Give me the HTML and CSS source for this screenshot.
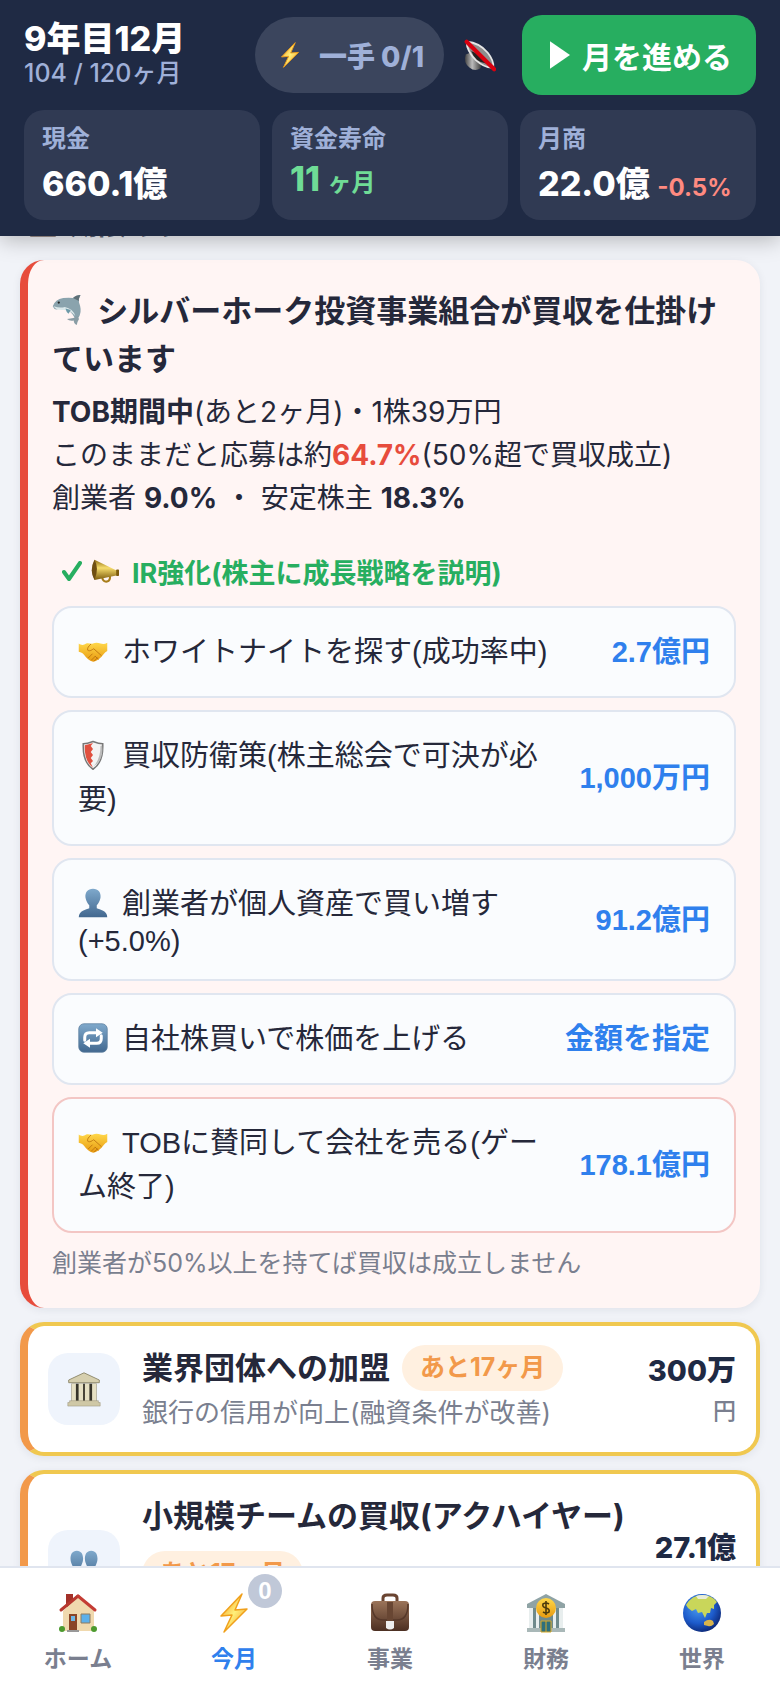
FILE: index.html
```html
<!DOCTYPE html>
<html lang="ja">
<head>
    <meta charset="UTF-8">
    <meta name="viewport" content="width=device-width, initial-scale=1.0">
    <title>9年目12月</title>
    <link rel="stylesheet" href="styles.css">
</head>
<body>
    <!-- Shared icons -->
    <svg class="defs" width="0" height="0" aria-hidden="true">
        <defs>
            <linearGradient id="g-bolt" x1="0" y1="0" x2="1" y2="1">
                <stop offset="0" stop-color="#f08a12"/>
                <stop offset="0.5" stop-color="#fff07a"/>
                <stop offset="1" stop-color="#f08a12"/>
            </linearGradient>
            <linearGradient id="g-gold" x1="0" y1="0" x2="0" y2="1">
                <stop offset="0" stop-color="#ffd84a"/>
                <stop offset="1" stop-color="#e89a10"/>
            </linearGradient>
            <linearGradient id="g-blue" x1="0" y1="0" x2="0" y2="1">
                <stop offset="0" stop-color="#7fa9cc"/>
                <stop offset="1" stop-color="#42688f"/>
            </linearGradient>
            <linearGradient id="g-brass" x1="0" y1="0" x2="0" y2="1">
                <stop offset="0" stop-color="#8f6c14"/>
                <stop offset="0.4" stop-color="#f6dc6c"/>
                <stop offset="1" stop-color="#7c5a0c"/>
            </linearGradient>
            <linearGradient id="g-bag" x1="0" y1="0" x2="0" y2="1">
                <stop offset="0" stop-color="#9b7459"/>
                <stop offset="1" stop-color="#4c2f22"/>
            </linearGradient>
            <radialGradient id="g-globe" cx="0.4" cy="0.35" r="0.7">
                <stop offset="0" stop-color="#4b9df0"/>
                <stop offset="0.6" stop-color="#1d5bcb"/>
                <stop offset="1" stop-color="#0b2470"/>
            </radialGradient>
            <linearGradient id="g-metal" x1="0" y1="0" x2="1" y2="0">
                <stop offset="0" stop-color="#444"/>
                <stop offset="0.4" stop-color="#bbb"/>
                <stop offset="1" stop-color="#222"/>
            </linearGradient>
        </defs>
        <symbol id="i-bolt" viewBox="0 0 40 40">
            <path d="M28 1 7 23l11-1-8 17 23-23-12 1z" fill="url(#g-bolt)" stroke="#f0a01c" stroke-width="1.5" stroke-linejoin="round"/>
        </symbol>
        <symbol id="i-shake" viewBox="0 0 40 40">
            <path d="M1 10c4 3 7 2 10 0 3-1 6 1 9 0 4-2 7-1 10 0s6 1 9-1v11c-4 2-5 5-8 8-4 4-9 7-12 6-4-1-8-5-11-9-2-3-4-3-7-4z" fill="url(#g-gold)"/>
            <path d="M17 11c-3 3-5 5-4 8 3 2 6-1 8-2l10 9M14 29l5-5M18 32l5-5M22 33l4-4M27 31l-4-4" fill="none" stroke="#bd7410" stroke-width="1.2" stroke-linecap="round"/>
        </symbol>
        <symbol id="i-bag" viewBox="0 0 40 40">
            <path d="M13 8V5q0-3 4-3h6q4 0 4 3v3" fill="none" stroke="#6a4431" stroke-width="3"/>
            <rect x="1" y="8" width="38" height="30" rx="4" fill="url(#g-bag)"/>
            <path d="M2 11q0 16 11 16h14q11 0 11-16" fill="none" stroke="#56382a" stroke-width="1.5"/>
            <path d="M17 9h6v19h-6z" fill="#684633"/>
            <path d="M16 28h8v7q-4 3-8 0z" fill="#eee"/>
        </symbol>
    </svg>

    <header class="top">
        <div class="top-row">
            <div class="date">
                <div class="date-main">9年目12月</div>
                <div class="date-sub">104 / 120ヶ月</div>
            </div>
            <div class="moves">
                <svg class="ico-sm"><use href="#i-bolt"/></svg>
                <span>一手 0/1</span>
            </div>
            <button class="mute" aria-label="ミュート">
                <svg class="ico-mute" viewBox="0 0 36 36">
                    <path d="M3 17q-3 9 4 14 6 5 12 1l3-8-11-10z" fill="url(#g-metal)"/>
                    <path d="M4 3q14 1 23 12 7 9 6 16-9 1-19-8Q4 13 4 3z" fill="#8d8d8d" stroke="#e6e6e6" stroke-width="2"/>
                    <path d="M9 13q11 4 17 14-13-2-17-14z" fill="#222"/>
                    <path d="M4 3 34 33" stroke="#d9000f" stroke-width="4.5" stroke-linecap="round"/>
                </svg>
            </button>
            <button class="advance">
                <svg class="play" viewBox="0 0 22 30"><path d="M0 0 22 15 0 30z" fill="#fff"/></svg>
                月を進める
            </button>
        </div>
        <div class="stats">
            <div class="stat">
                <div class="stat-label">現金</div>
                <div class="stat-value">660.1億</div>
            </div>
            <div class="stat">
                <div class="stat-label">資金寿命</div>
                <div class="stat-value good">11 <small>ヶ月</small></div>
            </div>
            <div class="stat">
                <div class="stat-label">月商</div>
                <div class="stat-value">22.0億 <small class="down">-0.5%</small></div>
            </div>
        </div>
    </header>

    <main>
        <h2 class="section-title"><svg class="ico"><use href="#i-bag"/></svg>期限あり</h2>

        <section class="card tob">
            <h3>
                <svg class="ico" viewBox="0 0 40 40">
                    <path d="M1 15q3-9 14-11 8-1 13 0 4-4 10-4-3 5-2 10 4 10 1 17-2 5-6 6-3-9-9-12-9-4-15-2-4 1-6-4z" fill="#8aa3ad"/>
                    <path d="M2 15q9 3 15 1 11 2 14 12-6-8-15-8-10 1-14-5z" fill="#dbe8ea"/>
                    <path d="M28 4q4-4 10-4-3 5-2 8z" fill="#5f7077"/>
                    <path d="M18 18q1 5 4 7l3-5z" fill="#6d9aa8"/>
                    <path d="M34 28q-4 3-14 4 3 3 9 2 0 4 4 6 1-5 3-8z" fill="#8a9da5"/>
                    <circle cx="9" cy="10" r="1.5" fill="#222"/>
                </svg>
                シルバーホーク投資事業組合が買収を仕掛けています
            </h3>
            <p class="tob-info">
                <b>TOB期間中</b>(あと2ヶ月)・1株39万円<br>
                このままだと応募は約<b class="danger">64.7%</b>(50%超で買収成立)<br>
                創業者 <b>9.0%</b> ・ 安定株主 <b>18.3%</b>
            </p>
            <div class="done">
                <svg class="check" viewBox="0 0 20 20"><path d="M2 11l5 7L18 2" fill="none" stroke="#27ae60" stroke-width="4" stroke-linecap="round" stroke-linejoin="round"/></svg>
                <svg class="horn" viewBox="0 0 40 40">
                    <path d="M16 29q1 7 7 6 5-1 4-8" fill="none" stroke="#a87d1a" stroke-width="3"/>
                    <path d="M5 4 38 20v6L5 33Q-1 18 5 4z" fill="url(#g-brass)"/>
                    <path d="M5 4q7 12 0 29Q-3 19 5 4z" fill="#6f4e12"/>
                    <rect x="36" y="18" width="4" height="9" rx="1" fill="#7c5a0c"/>
                </svg>
                <span>IR強化(株主に成長戦略を説明)</span>
            </div>
            <div class="actions">
                <button class="action">
                    <span class="action-name"><svg class="ico"><use href="#i-shake"/></svg><span>ホワイトナイトを探す(成功率中)</span></span>
                    <span class="action-cost">2.7億円</span>
                </button>
                <button class="action">
                    <span class="action-name"><svg class="ico" viewBox="0 0 40 40">
                        <path d="M20 2q8 3 13 3 1 25-13 34Q6 30 7 5q5 0 13-3z" fill="#f3f3f3" stroke="#777" stroke-width="2"/>
                        <path d="M20 4q-6 2-11 3-1 21 11 30l-3-6 3-3-3-4 3-4-3-4 3-4-3-4z" fill="#e0503f"/>
                        <path d="M30 8q0 17-9 27 14-9 11-28z" fill="#bbb"/>
                    </svg><span>買収防衛策(株主総会で可決が必要)</span></span>
                    <span class="action-cost">1,000万円</span>
                </button>
                <button class="action">
                    <span class="action-name"><svg class="ico" viewBox="0 0 40 40">
                        <path d="M20 1c7 0 11 5 10 12-1 5-3 8-5 10v4c4 2 14 3 14 12H1c0-9 10-10 14-12v-4c-2-2-4-5-5-10C9 6 13 1 20 1z" fill="url(#g-blue)"/>
                    </svg><span>創業者が個人資産で買い増す</span>(+5.0%)</span>
                    <span class="action-cost">91.2億円</span>
                </button>
                <button class="action">
                    <span class="action-name"><svg class="ico" viewBox="0 0 40 40">
                        <rect x="1" y="1" width="38" height="38" rx="7" fill="url(#g-blue)" stroke="#5c7f9f"/>
                        <path d="M9 23v-4q0-6 6-6h11M31 17v4q0 6-6 6H14" fill="none" stroke="#fff" stroke-width="4" stroke-linecap="round"/>
                        <path d="M24 7l9 6-9 6zM16 21l-9 6 9 6z" fill="#fff"/>
                    </svg><span>自社株買いで株価を上げる</span></span>
                    <span class="action-cost">金額を指定</span>
                </button>
                <button class="action sell">
                    <span class="action-name"><svg class="ico"><use href="#i-shake"/></svg><span>TOBに賛同して会社を売る(ゲーム終了)</span></span>
                    <span class="action-cost">178.1億円</span>
                </button>
            </div>
            <p class="hint">創業者が50%以上を持てば買収は成立しません</p>
        </section>

        <section class="card offer">
            <div class="offer-icon">
                <svg class="ico-lg" viewBox="0 0 40 40">
                    <path d="M20 2 37 10v3H3v-3z" fill="#d6cfae" stroke="#8a8468"/>
                    <path d="M6 14h28v20H6z" fill="#37342a"/>
                    <path d="M6 14h5v20H6zM14 14h5v20h-5zM21 14h5v20h-5zM29 14h5v20h-5z" fill="#e6e0c3"/>
                    <path d="M4 33h32v2h2v4H2v-4h2z" fill="#cfc8a6" stroke="#8f8970" stroke-width="0.5"/>
                </svg>
            </div>
            <div class="offer-body">
                <div class="offer-title"><h3>業界団体への加盟</h3><span class="tag">あと17ヶ月</span></div>
                <p>銀行の信用が向上(融資条件が改善)</p>
            </div>
            <div class="offer-cost">300万<small>円</small></div>
        </section>

        <section class="card offer">
            <div class="offer-icon">
                <svg class="ico-lg" viewBox="0 0 40 40">
                    <path d="M12 3c5 0 7 4 7 9s-3 8-3 11 8 3 8 12H0c0-9 8-9 8-12s-3-6-3-11 2-9 7-9z" fill="url(#g-blue)"/>
                    <path d="M28 3c5 0 7 4 7 9s-3 8-3 11 8 3 8 12H18c0-9 6-9 6-12s-3-6-3-11 2-9 7-9z" fill="url(#g-blue)"/>
                </svg>
            </div>
            <div class="offer-body">
                <div class="offer-title"><h3>小規模チームの買収(アクハイヤー)</h3><span class="tag">あと17ヶ月</span></div>
                <p>人材を獲得</p>
            </div>
            <div class="offer-cost">27.1億<small>円</small></div>
        </section>
    </main>

    <nav class="tabs">
        <a href="#home">
            <svg class="ico-nav" viewBox="0 0 40 40">
                <path d="M8 1h7v13H8z" fill="#a33129"/>
                <path d="M20 3 5 18v20h31V18z" fill="#f0d9ae"/>
                <path d="M20 3 3 17" stroke="#b7382f" stroke-width="3" stroke-linecap="round"/>
                <path d="M20 3 37 17" stroke="#c43c34" stroke-width="3" stroke-linecap="round"/>
                <path d="M11 21h8v17h-8z" fill="#8a4526"/>
                <path d="M13 23h4v5h-4z" fill="#6cb7e6"/>
                <path d="M23 21h9v9h-9z" fill="#5db0ea" stroke="#8d7b61"/>
                <circle cx="4" cy="36" r="3" fill="#4c9a2f"/>
                <circle cx="36" cy="36" r="3" fill="#4c9a2f"/>
                <path d="M9 37h12v2H9z" fill="#999"/>
            </svg>
            ホーム
        </a>
        <a href="#month" class="active">
            <svg class="ico-nav"><use href="#i-bolt"/></svg>
            今月
            <span class="badge">0</span>
        </a>
        <a href="#business">
            <svg class="ico-nav"><use href="#i-bag"/></svg>
            事業
        </a>
        <a href="#finance">
            <svg class="ico-nav" viewBox="0 0 40 40">
                <path d="M20 1 39 11v4H1v-4z" fill="#8fa3a5"/>
                <path d="M3 15h34v21H3z" fill="#6f8a8c"/>
                <path d="M3 15h4v21H3zM10 15h3v21h-3zM27 15h3v21h-3zM33 15h4v21h-4z" fill="#e8eeee"/>
                <path d="M1 35h38v4H1z" fill="#a9b8b8"/>
                <path d="M15 28h10v11H15z" fill="#2e6f7c" stroke="#d8a928"/>
                <path d="M20 28v11" stroke="#d8a928"/>
                <circle cx="20" cy="15" r="10" fill="url(#g-gold)"/>
                <path d="M23 11q-3-2-6 0-1 3 3 4t3 4q-3 2-6 0M20 8v14" fill="none" stroke="#4c3a0c" stroke-width="1.6"/>
            </svg>
            財務
        </a>
        <a href="#world">
            <svg class="ico-nav" viewBox="0 0 40 40">
                <circle cx="20" cy="20" r="19" fill="url(#g-globe)"/>
                <path d="M4 12Q10 2 20 2q10 0 15 7l-3 3v4l-3-1-1 5-3 0-2 5-3-6-4 1-2-4-4 2-4-3z" fill="#c9d65a"/>
                <path d="M14 3q6-2 13 0l-3 3h-8z" fill="#e9edd8"/>
                <path d="M22 29q5-4 9-1l1 3q-3 3-6 2l-4-1z" fill="#d8b44c"/>
            </svg>
            世界
        </a>
    </nav>
</body>
</html>
```
FILE: styles.css
```css
* {
    box-sizing: border-box;
}

body {
    margin: 0;
    font-family: Inter, "Noto Sans CJK JP", sans-serif;
    font-size: 28px;
    color: #25283a;
    background: #f1f3f8;
    height: 100vh;
    overflow: hidden;
    display: flex;
    flex-direction: column;
}

h2, h3, p {
    margin: 0;
}

button {
    border: none;
    cursor: pointer;
}

svg {
    flex: none;
}

.defs {
    position: absolute;
}

.ico {
    width: 30px;
    height: 30px;
}

.ico-sm {
    width: 26px;
    height: 26px;
}

.ico-mute {
    width: 33px;
    height: 33px;
}

.ico-lg {
    width: 36px;
    height: 36px;
}

.ico-nav {
    width: 40px;
    height: 40px;
}

/* Header */
.top {
    position: relative;
    z-index: 2;
    flex: none;
    padding: 15px 24px 16px;
    background: #1f2a44;
    box-shadow: 0 4px 20px rgba(0, 0, 0, 0.25);
}

.top-row {
    display: flex;
    align-items: center;
    height: 80px;
    margin-bottom: 15px;
}

.date {
    flex: 1;
}

.date-main {
    font-size: 34px;
    font-weight: 800;
    line-height: 36px;
    color: #fff;
}

.date-sub {
    font-size: 25px;
    font-weight: 500;
    line-height: 32px;
    color: #9fb0d8;
}

.moves {
    display: flex;
    align-items: center;
    gap: 16px;
    height: 76px;
    padding: 0 20px 0 22px;
    border-radius: 38px;
    background: #3b455d;
    color: #9fb0d8;
    font-size: 28px;
    font-weight: 800;
}

.mute {
    display: flex;
    padding: 0 26px 0 19px;
    background: none;
}

.advance {
    display: flex;
    align-items: center;
    gap: 12px;
    height: 80px;
    padding: 0 24px 0 28px;
    border-radius: 20px;
    background: #27ae60;
    color: #fff;
    font-family: inherit;
    font-size: 30px;
    font-weight: 700;
}

.play {
    width: 20px;
    height: 28px;
}

.stats {
    display: grid;
    grid-template-columns: repeat(3, 1fr);
    gap: 12px;
}

.stat {
    height: 110px;
    padding: 12px 18px;
    border-radius: 20px;
    background: #303a53;
    white-space: nowrap;
}

.stat-label {
    font-size: 24px;
    font-weight: 600;
    line-height: 34px;
    color: #9fb0d8;
}

.stat-value {
    font-size: 34px;
    font-weight: 800;
    line-height: 56px;
    color: #fff;
}

.stat-value small {
    font-size: 24px;
    font-weight: 700;
}

.stat-value.good {
    line-height: 46px;
    color: #6fdc96;
}

.stat-value .down {
    color: #ff8a80;
}

/* Content */
main {
    flex: 1;
    min-height: 0;
    padding: 0 20px;
    overflow: hidden;
}

.section-title {
    display: flex;
    align-items: center;
    gap: 12px;
    height: 38px;
    margin: -32px 0 18px;
    padding-left: 8px;
    font-size: 28px;
    font-weight: 700;
    color: #5d6475;
}

.card {
    margin-bottom: 14px;
    border-radius: 24px;
    box-shadow: 0 2px 8px rgba(31, 42, 68, 0.08);
}

.tob {
    padding: 27px 24px 26px;
    border-left: 8px solid #e74c3c;
    background: #fff5f4;
}

.tob h3 {
    font-size: 31px;
    font-weight: 700;
    line-height: 48px;
}

.tob h3 .ico {
    margin-right: 8px;
    vertical-align: -3px;
}

.tob-info {
    margin-top: 8px;
    line-height: 43px;
}

.danger {
    color: #e74c3c;
}

.done {
    display: flex;
    align-items: center;
    height: 48px;
    margin: 27px 0 11px;
    padding-left: 10px;
    font-size: 27px;
    font-weight: 700;
    color: #27ae60;
}

.check {
    width: 20px;
    height: 20px;
}

.horn {
    width: 28px;
    height: 28px;
    margin: 0 13px 0 9px;
}

.actions {
    display: flex;
    flex-direction: column;
    gap: 12px;
}

.action {
    display: flex;
    align-items: center;
    justify-content: space-between;
    gap: 24px;
    padding: 22px 24px;
    border: 2px solid #e0e6f0;
    border-radius: 20px;
    background: #fafcfe;
    color: #25283a;
    font-family: "Liberation Sans", "Noto Sans CJK JP", sans-serif;
    font-size: 29px;
    line-height: 44px;
    text-align: left;
}

.action.sell {
    border-color: #f3c6c4;
}

.action .ico {
    margin-right: 14px;
    vertical-align: -4px;
}

.action-name {
    max-width: 472px;
    line-height: 31px;
}

.action-name span {
    line-height: 44px;
}

.action-cost {
    flex: none;
    color: #2f80ed;
    font-weight: 700;
}

.hint {
    margin-top: 11px;
    font-size: 25px;
    line-height: 38px;
    color: #7a7f8f;
}

.offer {
    display: flex;
    align-items: center;
    padding: 17px 20px;
    border: 4px solid #f0c850;
    border-left: 8px solid #f2994a;
    background: #fff;
}

.offer-icon {
    display: flex;
    align-items: center;
    justify-content: center;
    flex: none;
    width: 72px;
    height: 72px;
    margin-right: 22px;
    border-radius: 20px;
    background: #eff4fc;
}

.offer-body {
    flex: 1;
    padding-top: 2px;
}

.offer-title {
    display: flex;
    flex-wrap: wrap;
    align-items: center;
    gap: 12px;
}

.offer-title h3 {
    font-size: 31px;
    font-weight: 700;
    line-height: 46px;
}

.tag {
    height: 46px;
    padding: 0 18px;
    border-radius: 23px;
    background: #fff0e0;
    color: #f2994a;
    font-size: 25px;
    font-weight: 700;
    line-height: 44px;
}

.offer-body p {
    font-size: 26px;
    line-height: 44px;
    color: #7a7f8f;
}

.offer-cost {
    flex: none;
    padding-top: 2px;
    text-align: right;
    font-size: 29px;
    font-weight: 800;
    line-height: 42px;
    color: #1f2a44;
}

.offer-cost small {
    display: block;
    font-size: 23px;
    font-weight: 500;
    line-height: 38px;
    color: #7a7f8f;
}

/* Bottom tabs */
.tabs {
    position: relative;
    z-index: 2;
    flex: none;
    display: grid;
    grid-template-columns: repeat(5, 1fr);
    height: 122px;
    border-top: 2px solid #e0e5ef;
    background: #fff;
}

.tabs a {
    position: relative;
    display: flex;
    flex-direction: column;
    align-items: center;
    gap: 9px;
    padding-top: 25px;
    color: #7a7f8f;
    font-size: 23px;
    font-weight: 600;
    line-height: 34px;
    text-decoration: none;
}

.tabs a.active {
    color: #2f80ed;
}

.badge {
    position: absolute;
    top: 6px;
    left: 92px;
    width: 34px;
    height: 34px;
    border-radius: 50%;
    background: #c0c8d8;
    color: #fff;
    font-family: "Liberation Sans", sans-serif;
    font-size: 24px;
    font-weight: 700;
    line-height: 33px;
    text-align: center;
}
```
